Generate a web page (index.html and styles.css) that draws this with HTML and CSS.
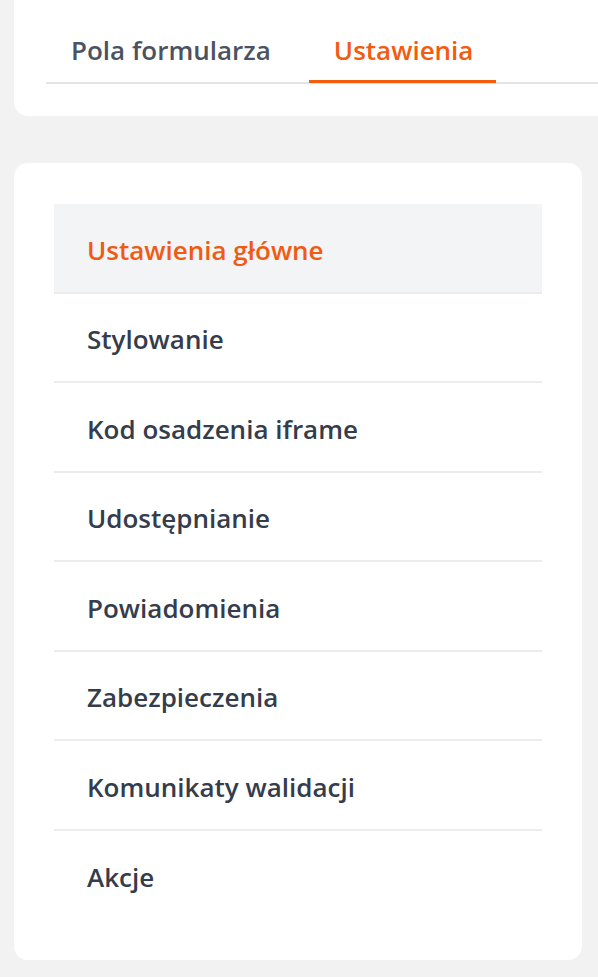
FILE: index.html
```html
<!DOCTYPE html>
<html lang="pl">
<head>
<meta charset="utf-8">
<link rel="stylesheet" href="styles.css">
</head>
<body>
<div class="page">
  <div class="card tabs-card">
    <nav class="tabs">
      <a class="tab">Pola formularza</a>
      <a class="tab active">Ustawienia</a>
    </nav>
  </div>
  <div class="card menu-card">
    <ul class="menu">
      <li class="item active">Ustawienia główne</li>
      <li class="item">Stylowanie</li>
      <li class="item">Kod osadzenia iframe</li>
      <li class="item">Udostępnianie</li>
      <li class="item">Powiadomienia</li>
      <li class="item">Zabezpieczenia</li>
      <li class="item">Komunikaty walidacji</li>
      <li class="item last">Akcje</li>
    </ul>
  </div>
</div>
</body>
</html>
```
FILE: styles.css
```css
html, body {
  margin: 0;
  padding: 0;
  background: #f2f2f2;
}
body {
  font-family: "Open Sans", "Noto Sans", sans-serif;
  font-weight: 600;
  width: 598px;
  height: 977px;
  overflow: hidden;
}
.page {
  display: flex;
  flex-direction: column;
  gap: 47px;
  padding-left: 14px;
}
.card {
  background: #fff;
}
.tabs-card {
  height: 116px;
  border-radius: 0 0 0 14px;
  padding: 0 0 32px 32px;
  box-sizing: border-box;
  display: flex;
  align-items: flex-end;
}
.tabs {
  display: flex;
  gap: 15px;
  width: 100%;
  border-bottom: 2px solid #e2e4e8;
}
.tab {
  font-size: 26px;
  line-height: 36px;
  padding: 28px 23px 12px 25px;
  color: #4b5260;
  border-bottom: 3px solid transparent;
  margin-bottom: -2px;
}
.tab.active {
  color: #f35b0f;
  border-bottom-color: #f35b0f;
  margin-bottom: -1px;
}
.menu-card {
  width: 568px;
  border-radius: 14px;
  padding: 41px 40px 40px;
  box-sizing: border-box;
}
.menu {
  list-style: none;
  margin: 0;
  padding: 0;
}
.item {
  box-sizing: border-box;
  height: 89.5px;
  display: flex;
  align-items: center;
  padding: 4px 33px 0;
  font-size: 26px;
  color: #353c4c;
  border-bottom: 2px solid #ececef;
}
.item.active {
  background: #f3f4f6;
  color: #f05b14;
}
.item.last {
  border-bottom: none;
}
```
